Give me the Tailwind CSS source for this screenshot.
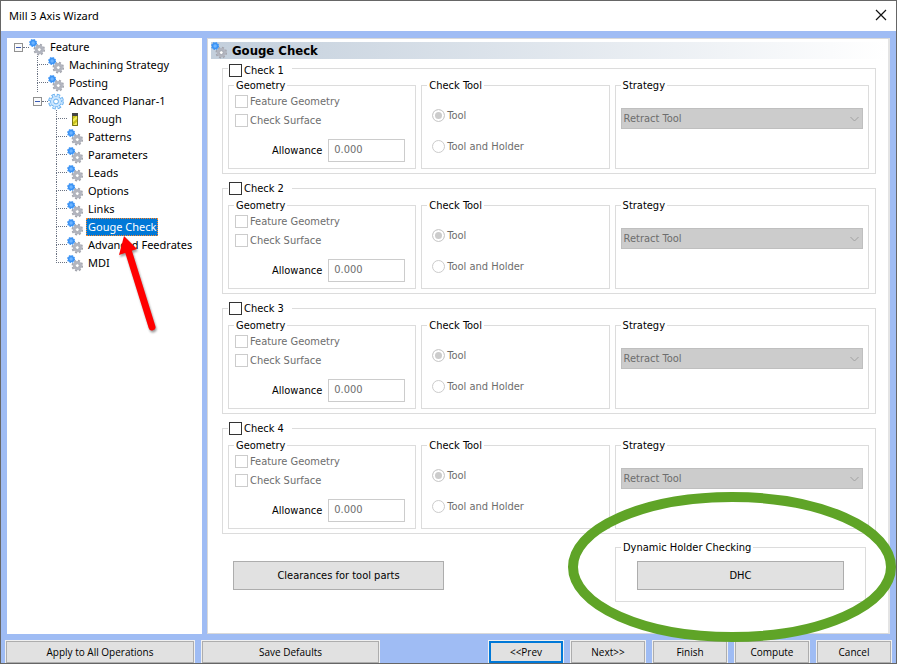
<!DOCTYPE html>
<html lang="en">

<head>
	<meta charset="UTF-8">
	<meta name="viewport" content="width=device-width, initial-scale=1.0">
	<title>Mill 3 Axis Wizard</title>
	<script src="https://cdn.jsdelivr.net/npm/@tailwindcss/browser@4"></script>
</head>

<body class="bg-white text-black text-[11px] leading-[13px] font-['DejaVu_Sans_Condensed','Open_Sans',sans-serif]">

	<!-- Shared icons -->
	<svg class="hidden">
		<symbol id="gears" viewBox="0 0 17 17">
			<circle cx="10.3" cy="10.6" r="4.9" fill="none" stroke="#a3a5ad" stroke-width="1.8" stroke-dasharray="2.1 1.75" />
			<circle cx="10.3" cy="10.6" r="3.3" fill="none" stroke="#b2b5bf" stroke-width="2.6" />
			<circle cx="10.3" cy="10.6" r="1.9" fill="#fff" stroke="#92959f" stroke-width=".7" />
			<circle cx="4.1" cy="4" r="3.4" fill="none" stroke="#3b93f5" stroke-width="1.2" stroke-dasharray="1.6 1.07" />
			<circle cx="4.1" cy="4" r="3.2" fill="#3b93f5" />
			<circle cx="4.1" cy="4" r="1.7" fill="#6db4ff" />
		</symbol>
		<symbol id="gear" viewBox="0 0 17 17">
			<circle cx="8" cy="8.5" r="6.4" fill="none" stroke="#64aef0" stroke-width="3" stroke-dasharray="3.2 1.827" />
			<circle cx="8" cy="8.5" r="5.8" fill="#64aef0" />
			<circle cx="8" cy="8.5" r="6" fill="none" stroke="#cfe8ff" stroke-width="2" stroke-dasharray="1.8 2.912" stroke-dashoffset="-.7" />
			<circle cx="8" cy="8.5" r="5" fill="#cfe8ff" />
			<circle cx="8" cy="8.5" r="2.4" fill="#fff" stroke="#64aef0" />
		</symbol>
		<symbol id="tool" viewBox="0 0 17 17">
			<path d="M5 2h6v3H5z" fill="#444" />
			<path d="M5 5h6v10H5z" fill="#c9c21c" />
			<path d="M5 9l5-4h1v2l-6 5zM5 15l6-5v3l-3 2z" fill="#f0ec5a" />
			<path d="M5.500 5v9.500h5V5" fill="none" stroke="#77741a" />
		</symbol>
		<symbol id="minus" viewBox="0 0 9 9">
			<rect x=".5" y=".5" width="8" height="8" fill="#fafafa" stroke="#919191" />
			<path d="M2 4.5h5" stroke="#3b5bb5" />
		</symbol>
	</svg>

	<div class="min-h-screen flex flex-col bg-[#9fbcf4] border border-[#666] overflow-hidden">

		<!-- Title bar -->
		<header class="h-[30px] shrink-0 flex items-center justify-between bg-white pl-2 pr-[9px] font-['Noto_Sans',sans-serif]">
			<h1 class="pb-0.5">Mill 3 Axis Wizard</h1>
			<button aria-label="Close" class="pb-0.5">
				<svg class="w-3 h-3" viewBox="0 0 12 12"><path d="M1 1l10 10M11 1L1 11" stroke="#111" stroke-width="1.2" /></svg>
			</button>
		</header>

		<div class="flex-1 flex gap-[5px] px-1.5 pt-[7px]">

			<!-- Feature tree -->
			<nav class="relative w-[195px] shrink-0 bg-white pl-[7px] font-['Noto_Sans',sans-serif]">
				<div class="flex items-center h-[18px]">
					<svg class="w-[9px] h-[9px]"><use href="#minus" /></svg>
					<i class="w-1.5 border-t border-dotted border-gray-500"></i>
					<svg class="w-[17px] h-[17px]"><use href="#gears" /></svg>
					<span class="pl-1 pb-0.5">Feature</span>
				</div>
				<ul id="tree"></ul>
				<svg class="absolute left-[105px] top-[194px] w-12 h-[104px] drop-shadow-[1px_2px_1px_#0006]" viewBox="0 0 48 104">
					<path d="M16 18L40 95" stroke="#f00" stroke-width="7" stroke-linecap="round" />
					<path d="M12 4L7 23L25 17z" fill="#f00" />
				</svg>
			</nav>

			<!-- Gouge check page -->
			<main class="flex-1 bg-white border border-[#d9d9d9] border-r-2 border-r-[#e4e4e4] pl-[3px] pr-0.5 pt-[3px]">
				<div class="flex items-center h-[17px] bg-linear-to-r from-[#c3cfdc] to-white">
					<svg class="w-[17px] h-[17px]"><use href="#gears" /></svg>
					<h2 class="pl-1 text-[13px] font-bold">Gouge Check</h2>
				</div>
				<form class="pl-[11px] pr-2.5">
					<div id="checks" class="flex flex-col gap-[5px]"></div>
					<div class="flex justify-between items-start pt-[7px] pl-[11px] pr-2.5">
						<button type="button" class="mt-5 w-[211px] h-[29px] bg-[#e1e1e1] border border-[#adadad]">Clearances for tool parts</button>
						<fieldset class="relative w-[251px] border border-[#dcdcdc] px-[21px] pb-[11px]">
							<legend class="-ml-4 px-0.5">Dynamic Holder Checking</legend>
							<button type="button" class="mt-[7px] w-full h-[29px] bg-[#e1e1e1] border border-[#adadad]">DHC</button>
							<svg class="absolute -left-[49px] -top-[62px] w-[330px] h-[150px] pointer-events-none" viewBox="0 0 330 150">
								<ellipse cx="165" cy="75" rx="159" ry="70" fill="none" stroke="#5fa427" stroke-width="10" />
							</svg>
						</fieldset>
					</div>
				</form>
			</main>
		</div>

		<!-- Wizard buttons -->
		<footer class="flex justify-between px-[5px] pt-[7px] font-['Open_Sans',sans-serif] text-[10px]">
			<div class="flex gap-2">
				<button class="w-[188px] h-[22px] bg-[#e1e1e1] border border-[#adadad] outline outline-[#f0f0f0]">Apply to All Operations</button>
				<button class="w-[177px] h-[22px] bg-[#e1e1e1] border border-[#adadad] outline outline-[#f0f0f0]">Save Defaults</button>
			</div>
			<div class="flex gap-2">
				<button class="w-[74px] h-[22px] bg-[#e1e1e1] border-2 border-[#0078d7] outline outline-[#f0f0f0]">&lt;&lt;Prev</button>
				<button class="w-[74px] h-[22px] bg-[#e1e1e1] border border-[#adadad] outline outline-[#f0f0f0]">Next&gt;&gt;</button>
				<button class="w-[74px] h-[22px] bg-[#e1e1e1] border border-[#adadad] outline outline-[#f0f0f0]">Finish</button>
				<button class="w-[74px] h-[22px] bg-[#e1e1e1] border border-[#adadad] outline outline-[#f0f0f0]">Compute</button>
				<button class="w-[74px] h-[22px] bg-[#e1e1e1] border border-[#adadad] outline outline-[#f0f0f0]">Cancel</button>
			</div>
		</footer>
	</div>

	<script>
		const children = ['Rough', 'Patterns', 'Parameters', 'Leads', 'Options', 'Links', 'Gouge Check', 'Advanced Feedrates', 'MDI'];

		// Elbow of dotted lines in front of a row; the last row only goes half way down
		function elbow(last) {
			return `<span class="w-[11px] self-stretch">
				<i class="block h-[9px] border-l border-b border-dotted border-gray-500"></i>
				${last ? '' : '<i class="block h-[9px] border-l border-dotted border-gray-500"></i>'}
			</span>`;
		}

		const topRows = ['Machining Strategy', 'Posting'].map(name => `
			<li class="flex items-center h-[18px] pl-[23px]">
				${elbow(false)}
				<svg class="w-[17px] h-[17px]"><use href="#gears" /></svg>
				<span class="pl-1 pb-0.5">${name}</span>
			</li>`).join('');

		const planarRow = `
			<li class="flex items-center h-[18px] pl-[19px]">
				<svg class="w-[9px] h-[9px]"><use href="#minus" /></svg>
				<i class="w-1.5 border-t border-dotted border-gray-500"></i>
				<svg class="w-[17px] h-[17px]"><use href="#gear" /></svg>
				<span class="pl-1 pb-0.5">Advanced Planar-1</span>
			</li>`;

		const childRows = children.map((name, i) => `
			<li class="flex items-center h-[18px] pl-[42px]">
				${elbow(i === children.length - 1)}
				<svg class="w-[17px] h-[17px]"><use href="${name === 'Rough' ? '#tool' : '#gears'}" /></svg>
				<span class="${name === 'Gouge Check' ? 'ml-0.5 px-px h-[18px] leading-[15px] bg-[#0078d7] text-white border border-dotted border-[#ff8728]' : 'pl-1 pb-0.5'}">${name}</span>
			</li>`).join('');

		document.getElementById('tree').innerHTML = topRows + planarRow + childRows;

		document.getElementById('checks').innerHTML = [1, 2, 3, 4].map(n => `
			<fieldset class="border border-[#dcdcdc] pl-[5px] pr-1.5 pt-0.5 pb-1">
				<legend class="h-[18px] flex pr-2 ${n === 1 ? 'items-end' : 'items-center'}">
					<label class="flex items-center gap-0.5 pl-px">
						<input type="checkbox" class="appearance-none w-[13px] h-[13px] bg-white border border-[#333]">
						Check ${n}
					</label>
				</legend>
				<div class="grid grid-cols-[188fr_188fr_254fr] gap-[5px] h-[90px]">
					<fieldset class="border border-[#dcdcdc] pl-1.5 pr-2.5 pt-[3px] text-[#6d6d6d]">
						<legend class="-ml-px px-0.5 text-black">Geometry</legend>
						<label class="flex items-center gap-0.5">
							<input type="checkbox" disabled class="appearance-none w-[13px] h-[13px] bg-white border border-[#ccc]">
							Feature Geometry
						</label>
						<label class="flex items-center gap-0.5 mt-1.5">
							<input type="checkbox" disabled class="appearance-none w-[13px] h-[13px] bg-white border border-[#ccc]">
							Check Surface
						</label>
						<label class="flex items-center justify-end gap-1.5 mt-3 text-black">
							Allowance
							<input type="text" value="0.000" disabled class="w-[77px] h-[23px] px-[5px] pb-0.5 bg-white border border-[#ccc] text-[#6d6d6d]">
						</label>
					</fieldset>
					<fieldset class="border border-[#dcdcdc] pl-2.5 pt-[17px] text-[#6d6d6d]">
						<legend class="-ml-[5px] px-0.5 text-black">Check Tool</legend>
						<label class="flex items-center gap-0.5">
							<input type="radio" name="tool${n}" checked disabled class="appearance-none w-[13px] h-[13px] rounded-full bg-white border border-[#ccc] checked:bg-[#ccc] checked:shadow-[inset_0_0_0_2px_white]">
							Tool
						</label>
						<label class="flex items-center gap-0.5 mt-[18px]">
							<input type="radio" name="tool${n}" disabled class="appearance-none w-[13px] h-[13px] rounded-full bg-white border border-[#ccc]">
							Tool and Holder
						</label>
					</fieldset>
					<fieldset class="border border-[#dcdcdc] px-[5px] pt-4">
						<legend class="px-0.5">Strategy</legend>
						<div class="grid items-center">
							<select disabled aria-label="Strategy" class="col-start-1 row-start-1 appearance-none w-full h-[21px] px-0.5 bg-[#ccc] border border-[#bfbfbf] text-[#6d6d6d]">
								<option>Retract Tool</option>
							</select>
							<svg class="col-start-1 row-start-1 justify-self-end mr-1 w-[9px] h-[6px]" viewBox="0 0 9 6"><path d="M.5 1l4 4l4-4" fill="none" stroke="#a0a0a0" /></svg>
						</div>
					</fieldset>
				</div>
			</fieldset>`).join('');
	</script>

</body>

</html>
